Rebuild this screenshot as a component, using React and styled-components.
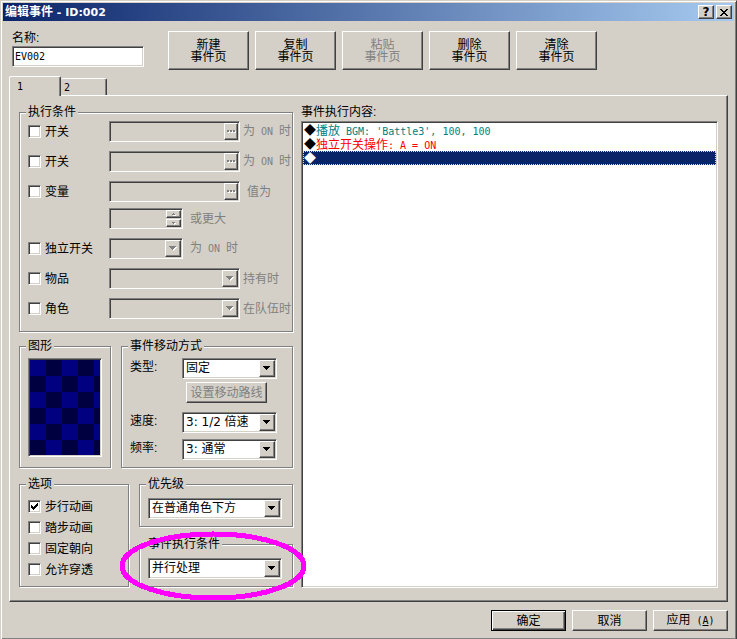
import React, { useState } from 'react';
import styled, { createGlobalStyle, css } from 'styled-components';

const face = '#d4d0c8';
const shadow = '#808080';
const dark = '#404040';
const sans = '"Liberation Sans", "Noto Sans CJK SC", sans-serif';

const raised = css`
    border: 1px solid;
    border-color: #fff ${dark} ${dark} #fff;
    box-shadow: inset -1px -1px 0 ${shadow};
`

const sunken = css`
    border: 1px solid;
    border-color: ${shadow} #fff #fff ${shadow};
    box-shadow: inset 1px 1px 0 ${dark}, inset -1px -1px 0 ${face};
`

const pageActions = [
    { name: '新建' },
    { name: '复制' },
    { name: '粘贴', disabled: true },
    { name: '删除' },
    { name: '清除' },
];

const optionNames = ['步行动画', '踏步动画', '固定朝向', '允许穿透'];

function CheckBox({ children, defaultChecked }) {
    return (
        <CheckLabel>
            <CheckMark>
                <input type="checkbox" defaultChecked={defaultChecked} />
                <svg width="7" height="7" viewBox="0 0 7 7" shapeRendering="crispEdges">
                    <path d="M0 2h1v3H0zM1 3h1v3H1zM2 4h1v3H2zM3 3h1v3H3zM4 2h1v3H4zM5 1h1v3H5zM6 0h1v3H6z" />
                </svg>
            </CheckMark>
            {children}
        </CheckLabel>
    )
}

function Combo({ id, options = [''], label, disabled, width }) {
    return (
        <Field $width={width} $disabled={disabled}>
            <select id={id} aria-label={label} disabled={disabled}>
                {options.map((option) => <option key={option}>{option}</option>)}
            </select>
            <Arrow>
                <svg width="8" height="5" viewBox="0 0 8 5" shapeRendering="crispEdges">
                    {disabled && <path d="M1 1h7v1H7v1H6v1H5v1H4V4H3V3H2V2H1z" fill="#fff" />}
                    <path d="M0 0h7v1H6v1H5v1H4v1H3V3H2V2H1V1H0z" fill={disabled ? shadow : '#000'} />
                </svg>
            </Arrow>
        </Field>
    )
}

function Picker({ label }) {
    return (
        <Field $width={131} $disabled>
            <input type="text" aria-label={label} disabled />
            <DotsButton type="button" aria-label="..." disabled>
                <svg width="9" height="3" viewBox="0 0 9 3" shapeRendering="crispEdges">
                    <path d="M1 1h2v2H1zM4 1h2v2H4zM7 1h2v2H7z" fill="#fff" />
                    <path d="M0 0h2v2H0zM3 0h2v2H3zM6 0h2v2H6z" fill={shadow} />
                </svg>
            </DotsButton>
        </Field>
    )
}

function Spinner({ label }) {
    return (
        <Field $width={74} $disabled>
            <input type="text" aria-label={label} disabled />
            <SpinButtons>
                <button type="button" aria-label="+" disabled>
                    <svg width="4" height="3" viewBox="0 0 4 3" shapeRendering="crispEdges">
                        <path d="M1 2h3v1H1z" fill="#fff" />
                        <path d="M1 0h1v1h1v1H0V1h1z" fill={shadow} />
                    </svg>
                </button>
                <button type="button" aria-label="-" disabled>
                    <svg width="4" height="3" viewBox="0 0 4 3" shapeRendering="crispEdges">
                        <path d="M2 1h2v1H3v1H2z" fill="#fff" />
                        <path d="M0 0h3v1H2v1H1V1H0z" fill={shadow} />
                    </svg>
                </button>
            </SpinButtons>
        </Field>
    )
}

function App() {
    const [tab, setTab] = useState(1);
    const [line, setLine] = useState(2);

    return (
        <Window>
            <GlobalStyle />
            <TitleBar>
                <h1>编辑事件<TitleLatin> - ID:002</TitleLatin></h1>
                <TitleButton type="button" aria-label="Help">?</TitleButton>
                <TitleButton type="button" aria-label="Close">
                    <svg width="8" height="7" viewBox="0 0 8 7" shapeRendering="crispEdges">
                        <path d="M0 0h2v1h1v1h2V1h1V0h2v1H7v1H6v1H5v1h1v1h1v1h1v1H6V6H5V5H3v1H2v1H0V6h1V5h1V4h1V3H2V2H1V1H0z" />
                    </svg>
                </TitleButton>
            </TitleBar>

            <Body>
                <Header>
                    <NameField>
                        <label htmlFor="name">名称:</label>
                        <Field>
                            <input id="name" type="text" defaultValue="EV002" />
                        </Field>
                    </NameField>
                    <PageActions>
                        {pageActions.map(({ name, disabled }) => (
                            <PageButton key={name} type="button" disabled={disabled}>
                                {name}<br />事件页
                            </PageButton>
                        ))}
                    </PageActions>
                </Header>

                <Tabs role="tablist">
                    {[1, 2].map((n) => (
                        <Tab key={n} type="button" role="tab" aria-selected={tab === n}
                            $active={tab === n} onClick={() => setTab(n)}>
                            <Half>{n}</Half>
                        </Tab>
                    ))}
                </Tabs>

                <Panel role="tabpanel">
                    <Settings>
                        <Group $top={2} $bottom={12}>
                            <legend>执行条件</legend>
                            <Conditions>
                                <Condition>
                                    <CheckBox>开关</CheckBox>
                                    <Picker label="开关" />
                                    <Suffix>为<Half> ON </Half>时</Suffix>
                                </Condition>
                                <Condition>
                                    <CheckBox>开关</CheckBox>
                                    <Picker label="开关" />
                                    <Suffix>为<Half> ON </Half>时</Suffix>
                                </Condition>
                                <ConditionPair>
                                    <Condition>
                                        <CheckBox>变量</CheckBox>
                                        <Picker label="变量" />
                                        <Suffix $wide>值为</Suffix>
                                    </Condition>
                                    <Condition>
                                        <span />
                                        <Spinner label="值为" />
                                        <Suffix $wide>或更大</Suffix>
                                    </Condition>
                                </ConditionPair>
                                <Condition>
                                    <CheckBox>独立开关</CheckBox>
                                    <Combo label="独立开关" width={74} disabled />
                                    <Suffix $wide>为<Half> ON </Half>时</Suffix>
                                </Condition>
                                <Condition>
                                    <CheckBox>物品</CheckBox>
                                    <Combo label="物品" width={131} disabled />
                                    <Suffix>持有时</Suffix>
                                </Condition>
                                <Condition>
                                    <CheckBox>角色</CheckBox>
                                    <Combo label="角色" width={131} disabled />
                                    <Suffix>在队伍时</Suffix>
                                </Condition>
                            </Conditions>
                        </Group>

                        <Split $left={92}>
                            <Group $top={5} $bottom={10}>
                                <legend>图形</legend>
                                <Graphic />
                            </Group>
                            <Group $top={5} $bottom={7}>
                                <legend>事件移动方式</legend>
                                <Movement>
                                    <MoveRow>
                                        <label htmlFor="type">类型:</label>
                                        <Combo id="type" options={['固定']} width={95} />
                                    </MoveRow>
                                    <RouteButton type="button" disabled>设置移动路线</RouteButton>
                                    <MoveRow>
                                        <label htmlFor="speed">速度:</label>
                                        <Combo id="speed" options={['3: 1/2 倍速']} width={95} />
                                    </MoveRow>
                                    <MoveRow $spaced>
                                        <label htmlFor="rate">频率:</label>
                                        <Combo id="rate" options={['3: 通常']} width={95} />
                                    </MoveRow>
                                </Movement>
                            </Group>
                        </Split>

                        <Split $left={110} $spaced>
                            <Group $top={5} $bottom={6}>
                                <legend>选项</legend>
                                {optionNames.map((name, i) => (
                                    <CheckBox key={name} defaultChecked={i === 0}>{name}</CheckBox>
                                ))}
                            </Group>
                            <Stack>
                                <Group $top={7} $bottom={7}>
                                    <legend>优先级</legend>
                                    <Combo label="优先级" options={['在普通角色下方']} width={134} />
                                </Group>
                                <Trigger>
                                    <Group $top={7} $bottom={7}>
                                        <legend>事件执行条件</legend>
                                        <Combo label="事件执行条件" options={['并行处理']} width={134} />
                                    </Group>
                                    <Marker viewBox="0 0 188 70" shapeRendering="crispEdges">
                                        <ellipse cx="94" cy="35" rx="91" ry="32" />
                                    </Marker>
                                </Trigger>
                            </Stack>
                        </Split>
                    </Settings>

                    <Contents>
                        <span id="contents">事件执行内容:</span>
                        <Commands role="listbox" aria-labelledby="contents">
                            <Command role="option" aria-selected={line === 0} $color="#008080"
                                $selected={line === 0} onClick={() => setLine(0)}>
                                <i>◆</i>播放<Half> BGM: 'Battle3', 100, 100</Half>
                            </Command>
                            <Command role="option" aria-selected={line === 1} $color="#f00"
                                $selected={line === 1} onClick={() => setLine(1)}>
                                <i>◆</i>独立开关操作<Half>: A = ON</Half>
                            </Command>
                            <Command role="option" aria-selected={line === 2}
                                $selected={line === 2} onClick={() => setLine(2)}>
                                <i>◆</i>
                            </Command>
                        </Commands>
                    </Contents>
                </Panel>

                <Footer>
                    <DefaultButton type="button">确定</DefaultButton>
                    <Button type="button">取消</Button>
                    <Button type="button">应用<Half> (<u>A</u>)</Half></Button>
                </Footer>
            </Body>
        </Window>
    )
}

const GlobalStyle = createGlobalStyle`
    * {
        box-sizing: border-box;
    }

    body {
        margin: 0;
        background: ${face};
        color: #000;
        font: 12px/14px ${sans};
    }

    button, input, select {
        margin: 0;
        padding: 0;
        border: 0;
        border-radius: 0;
        background: none;
        color: inherit;
        font: inherit;
        outline: none;
    }
`

const Window = styled.main`
    display: flex;
    flex-direction: column;
    min-height: 100vh;
    padding: 2px;
    border: 1px solid;
    border-color: ${face} ${dark} ${dark} ${face};
    box-shadow: inset 1px 1px 0 #fff, inset -1px -1px 0 ${shadow};
    background: ${face};
`

const TitleBar = styled.header`
    display: flex;
    align-items: center;
    gap: 2px;
    height: 18px;
    padding: 0 2px;
    background: linear-gradient(to right, #0a246a, #a6caf0);
    color: #fff;

    h1 {
        flex: 1;
        margin: 0;
        font-size: 12px;
        font-weight: bold;
        line-height: 18px;
        white-space: pre;
    }
`

const TitleLatin = styled.span`
    font-family: "DejaVu Sans", sans-serif;
    font-size: 11px;
`

const TitleButton = styled.button`
    ${raised}
    display: flex;
    align-items: center;
    justify-content: center;
    width: 16px;
    height: 14px;
    background: ${face};
    color: #000;
    font: bold 12px/12px "DejaVu Sans", sans-serif;
`

const Body = styled.div`
    display: flex;
    flex: 1;
    flex-direction: column;
    padding: 10px 6px 6px;
`

const Header = styled.div`
    display: flex;
    gap: 24px;
    padding-left: 3px;
`

const NameField = styled.div`
    display: flex;
    flex-direction: column;
    gap: 1px;
    width: 132px;
`

const PageActions = styled.div`
    display: flex;
    gap: 6px;
`

const Button = styled.button`
    ${raised}
    width: 75px;
    height: 21px;
    line-height: 18px;
    white-space: pre;

    &:disabled {
        color: ${shadow};
    }
`

const PageButton = styled(Button)`
    width: 81px;
    height: 39px;
    line-height: 12px;
`

const DefaultButton = styled(Button)`
    border-color: #000;
    box-shadow: inset 1px 1px 0 #fff, inset -1px -1px 0 ${dark}, inset -2px -2px 0 ${shadow};
`

const RouteButton = styled(Button)`
    width: 81px;
    margin: 3px 0 9px 56px;
`

// ascii text takes half the width of a chinese character
const Half = styled.span`
    font-family: "DejaVu Sans Mono", monospace;
    font-size: 10px;
    white-space: pre;
`

const Tabs = styled.div`
    display: flex;
    align-items: flex-end;
    height: 19px;
    margin-top: 6px;
`

const Tab = styled.button`
    ${raised}
    position: relative;
    width: ${({ $active }) => ($active ? 52 : 46)}px;
    height: ${({ $active }) => ($active ? 20 : 17)}px;
    margin-bottom: ${({ $active }) => ($active ? -1 : 0)}px;
    padding-left: ${({ $active }) => ($active ? 7 : 3)}px;
    border-bottom: 0;
    border-left-width: ${({ $active }) => ($active ? 1 : 0)}px;
    border-radius: 2px 2px 0 0;
    box-shadow: inset -1px 0 0 ${shadow};
    background: ${face};
    text-align: left;
`

const Panel = styled.section`
    ${raised}
    display: flex;
    flex: 1;
    gap: 7px;
    padding: 9px 9px 13px;
`

const Settings = styled.div`
    display: flex;
    flex: none;
    flex-direction: column;
    width: 275px;
    padding-right: 1px;
`

const Group = styled.fieldset`
    min-width: 0;
    margin: 0 0 1px;
    padding: ${({ $top, $bottom }) => `${$top}px 8px ${$bottom}px`};
    border: 1px solid ${shadow};
    box-shadow: 1px 1px 0 #fff, inset 1px 1px 0 #fff;

    legend {
        margin-left: -2px;
        padding: 0 2px;
        background: ${face};
    }
`

const Split = styled.div`
    display: grid;
    grid-template-columns: ${({ $left }) => $left}px 1fr;
    gap: 10px;
    margin-top: ${({ $spaced }) => ($spaced ? 8 : 6)}px;
`

const Stack = styled.div`
    display: flex;
    flex-direction: column;
    gap: 9px;
`

const Conditions = styled.div`
    display: flex;
    flex-direction: column;
    gap: 9px;
`

const ConditionPair = styled.div`
    display: flex;
    flex-direction: column;
    gap: 6px;
`

const Condition = styled.div`
    display: grid;
    grid-template-columns: 81px auto 1fr;
    align-items: center;
    height: 21px;
`

const Suffix = styled.span`
    padding-left: ${({ $wide }) => ($wide ? 7 : 3)}px;
    color: ${shadow};
    white-space: nowrap;
`

const CheckLabel = styled.label`
    display: flex;
    align-items: center;
    gap: 4px;
    height: 21px;
`

const CheckMark = styled.span`
    display: grid;
    place-items: center;

    input, svg {
        grid-area: 1 / 1;
    }

    input {
        ${sunken}
        width: 13px;
        height: 13px;
        appearance: none;
        background: #fff;
    }

    svg {
        visibility: hidden;
        pointer-events: none;
    }

    input:checked + svg {
        visibility: visible;
    }
`

const Field = styled.span`
    ${sunken}
    display: grid;
    width: ${({ $width }) => ($width ? `${$width}px` : '100%')};
    height: 21px;
    padding: 1px;
    background: ${({ $disabled }) => ($disabled ? face : '#fff')};

    & > * {
        grid-area: 1 / 1;
    }

    input, select {
        width: 100%;
        min-width: 0;
        height: 17px;
        padding-left: 2px;
        appearance: none;
    }

    select {
        font-family: "DejaVu Sans", "Noto Sans CJK SC", sans-serif;
        line-height: 17px;
    }

    input {
        padding-left: 1px;
        font-family: "DejaVu Sans Mono", monospace;
        font-size: 10px;
    }
`

const Arrow = styled.span`
    ${raised}
    display: flex;
    align-items: center;
    justify-content: center;
    justify-self: end;
    width: 16px;
    height: 17px;
    background: ${face};
    pointer-events: none;
`

const DotsButton = styled.button`
    ${raised}
    display: flex;
    align-items: center;
    justify-content: center;
    justify-self: end;
    width: 14px;
    height: 17px;
`

const SpinButtons = styled.span`
    display: flex;
    flex-direction: column;
    justify-content: space-between;
    justify-self: end;
    width: 15px;

    button {
        ${raised}
        display: flex;
        align-items: center;
        justify-content: center;
        height: 8px;
    }
`

const Graphic = styled.div`
    ${sunken}
    height: 99px;
    background: repeating-conic-gradient(#000040 0 25%, #000080 0 50%) 1px 1px / 32px 32px;
`

const Movement = styled.div`
    display: flex;
    flex-direction: column;
`

const MoveRow = styled.div`
    display: grid;
    grid-template-columns: 52px auto;
    justify-content: start;
    margin-top: ${({ $spaced }) => ($spaced ? 6 : 0)}px;

    label {
        line-height: 18px;
    }
`

const Trigger = styled.div`
    position: relative;
`

// hand-drawn ring around the trigger setting
const Marker = styled.svg`
    position: absolute;
    top: -6px;
    left: -20px;
    width: 188px;
    height: 70px;
    fill: none;
    stroke: #f0f;
    stroke-width: 5px;
    pointer-events: none;
`

const Contents = styled.div`
    display: flex;
    flex: 1;
    flex-direction: column;
    gap: 2px;
    min-width: 0;
`

const Commands = styled.ul`
    ${sunken}
    flex: 1;
    margin: 0;
    padding: 1px;
    background: #fff;
    list-style: none;
`

const Command = styled.li`
    height: 14px;
    padding-left: 1px;
    color: ${({ $color }) => $color || '#000'};
    line-height: 14px;
    white-space: nowrap;
    cursor: default;

    i {
        color: #000;
        font-family: "Noto Sans CJK SC", sans-serif;
        font-style: normal;
    }

    ${({ $selected }) => $selected && css`
        outline: 1px dotted #f5db95;
        outline-offset: -1px;
        background: #0a246a;
        color: #fff;

        i {
            color: #fff;
        }
    `}
`

const Footer = styled.footer`
    display: flex;
    justify-content: flex-end;
    gap: 6px;
    margin-top: 8px;
`

export default App;
